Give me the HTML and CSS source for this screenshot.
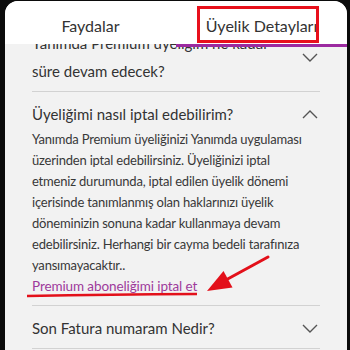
FILE: index.html
```html
<!DOCTYPE html>
<html lang="tr">
<head>
<meta charset="utf-8">
<title>Üyelik Detayları</title>
<link rel="stylesheet" href="styles.css">
</head>
<body>
<div class="screen">
  <header class="tabs">
    <div class="tab">Faydalar</div>
    <div class="tab active">Üyelik Detayları<span class="mark"></span></div>
  </header>
  <main class="content">
    <div class="list">
      <section class="item item-first">
        <div class="q">
          <span class="q-text">Yanımda Premium üyeliğim ne kadar süre devam edecek?</span>
          <svg class="chev" viewBox="0 0 16 9"><path d="M1 1 L8 8 L15 1"/></svg>
        </div>
      </section>
      <section class="item">
        <div class="q">
          <span class="q-text">Üyeliğimi nasıl iptal edebilirim?</span>
          <svg class="chev" viewBox="0 0 16 9"><path d="M1 8 L8 1 L15 8"/></svg>
        </div>
        <p class="a">Yanımda Premium üyeliğinizi Yanımda uygulaması<br>
üzerinden iptal edebilirsiniz. Üyeliğinizi iptal<br>
etmeniz durumunda, iptal edilen üyelik dönemi<br>
içerisinde tanımlanmış olan haklarınızı üyelik<br>
döneminizin sonuna kadar kullanmaya devam<br>
edebilirsiniz. Herhangi bir cayma bedeli tarafınıza<br>
yansımayacaktır..</p>
        <a class="link" href="#">Premium aboneliğimi iptal et</a>
      </section>
      <section class="item">
        <div class="q">
          <span class="q-text">Son Fatura numaram Nedir?</span>
          <svg class="chev" viewBox="0 0 16 9"><path d="M1 1 L8 8 L15 1"/></svg>
        </div>
      </section>
    </div>
  </main>
  <svg class="annot" viewBox="0 0 350 350" width="350" height="350">
    <path class="ul" d="M27 296 Q 110 294.5 197 294"/>
    <path class="shaft" d="M268 257 L224 281"/>
    <polygon class="head" points="207,291 232.5,287.5 223.5,271"/>
  </svg>
</div>
</body>
</html>
```

FILE: styles.css
```css
html, body {
  margin: 0;
  height: 100%;
}

body {
  background: #0b0b0b;
  padding: 1px 3px 0 5px;
  box-sizing: border-box;
  height: 350px;
  overflow: hidden;
  font-family: Lato, "Open Sans", "DejaVu Sans", sans-serif;
}

.screen {
  position: relative;
  height: 349px;
  background: #f2f2f2;
  border-radius: 13px 13px 0 0;
  overflow: hidden;
  display: flex;
  flex-direction: column;
}

.tabs {
  position: relative;
  z-index: 2;
  flex: none;
  height: 43px;
  background: #ffffff;
  display: flex;
}

.tab {
  position: relative;
  flex: 1;
  display: flex;
  align-items: center;
  justify-content: center;
  padding-top: 5px;
  box-sizing: border-box;
  font-size: 16px;
  color: #333333;
}

.tab.active::after {
  content: "";
  position: absolute;
  left: 0;
  right: -5px;
  top: 100%;
  height: 3px;
  background: #9c2aa0;
}

.mark {
  position: absolute;
  left: 21px;
  top: 5px;
  width: 122px;
  height: 37px;
  border: 3px solid #e8101c;
  box-sizing: border-box;
}

.content {
  flex: 1;
  overflow: hidden;
  padding: 0 27px;
}

.list {
  margin-top: -25px;
}

.item {
  padding: 10px 0 8px;
  border-bottom: 1px solid #d2d2d2;
}

.item-first {
  padding-bottom: 6px;
}

.q {
  display: flex;
  align-items: center;
  justify-content: space-between;
  font-size: 15px;
  line-height: 24px;
  color: #333333;
}

.item-first .q {
  line-height: 28px;
}

.q-text {
  max-width: 250px;
}

.chev {
  flex: none;
  width: 16px;
  height: 9px;
  margin-right: 2px;
}

.chev path {
  fill: none;
  stroke: #555555;
  stroke-width: 1.4;
}

.a {
  margin: 3px 0 0;
  font-size: 13px;
  letter-spacing: -0.2px;
  line-height: 21px;
  white-space: nowrap;
  color: #383838;
}

.link {
  display: block;
  font-size: 13.5px;
  letter-spacing: -0.1px;
  line-height: 21px;
  color: #9e3a9b;
  text-decoration: none;
}

.annot {
  position: absolute;
  left: -5px;
  top: -1px;
  pointer-events: none;
}

.annot .ul {
  fill: none;
  stroke: #e3101a;
  stroke-width: 2.5;
}

.annot .shaft {
  fill: none;
  stroke: #e3101a;
  stroke-width: 3;
  stroke-linecap: round;
}

.annot .head {
  fill: #e3101a;
}
```
